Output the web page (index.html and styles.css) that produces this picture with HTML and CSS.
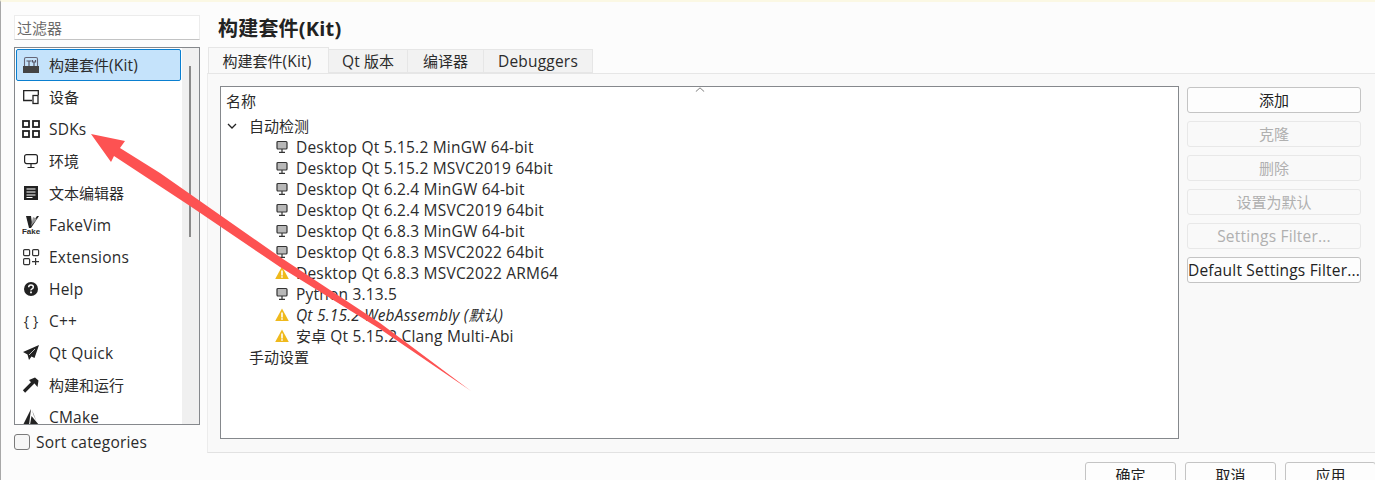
FILE: index.html
```html
<!DOCTYPE html>
<html>
	<head>
		<meta charset="utf-8">
		<title>构建套件(Kit)</title>
		<link rel="stylesheet" href="styles.css">
	</head>
	<body>
		<div class="window">
			<div class="content">
				<div class="side">
					<div class="filter cn">过滤器</div>
					<div class="cats">
						<div class="catlist">
							<div class="cat active">
								<svg class="caticon" viewBox="0 0 18 18"><path d="M1 10h16v7H1z" fill="#444"/><path d="M2.500 10V3q0-1.500 1.500-1.500h10q1.500 0 1.500 1.500v7" fill="none" stroke="#667" stroke-width="1.100"/><path d="M4.500 5h5M7 5v5M10.500 4v2h3V4M12 6v4" fill="none" stroke="#556" stroke-width="1.200"/></svg>
								<span><span class="cn">构建套件</span>(Kit)</span>
							</div>
							<div class="cat">
								<svg class="caticon" viewBox="0 0 18 18"><path d="M10 12.500H1.700V2.700h14.600V7" fill="none" stroke="#222" stroke-width="1.300"/><rect x="11" y="7.500" width="5" height="8" fill="#fff" stroke="#222" stroke-width="1.300"/></svg>
								<span class="cn">设备</span>
							</div>
							<div class="cat">
								<svg class="caticon" viewBox="0 0 18 18"><g fill="none" stroke="#222" stroke-width="1.800"><rect x="1" y="1" width="6" height="6"/><rect x="11" y="1" width="6" height="6"/><rect x="1" y="11" width="6" height="6"/><rect x="11" y="11" width="6" height="6"/></g></svg>
								<span>SDKs</span>
							</div>
							<div class="cat">
								<svg class="caticon" viewBox="0 0 18 18"><rect x="2.600" y="2.600" width="12.800" height="9" rx="2" fill="none" stroke="#222" stroke-width="1.200"/><path d="M9 11.500v4M5.500 15.500h7" fill="none" stroke="#222" stroke-width="1.200"/></svg>
								<span class="cn">环境</span>
							</div>
							<div class="cat">
								<svg class="caticon" viewBox="0 0 18 18"><path d="M2 2h14v14H2z" fill="#222"/><path d="M4.500 5h9M4.500 8h9M4.500 11h9M4.500 13.500h6" stroke="#fff" stroke-width="1.100"/></svg>
								<span class="cn">文本编辑器</span>
							</div>
							<div class="cat">
								<div class="fakeicon">
									<svg viewBox="0 0 18 12"><path d="M4 0h5l1 7 5-7h2L9 12H7z" fill="#222"/><path d="M11 1l4 2-6 7z" fill="#999"/></svg>
									<span class="faketext">Fake</span>
								</div>
								<span>FakeVim</span>
							</div>
							<div class="cat">
								<svg class="caticon" viewBox="0 0 18 18"><g fill="none" stroke="#333" stroke-width="1.200"><rect x="1.600" y="1.600" width="6" height="6" rx="1"/><rect x="10.600" y="1.600" width="6" height="6" rx="1"/><rect x="1.600" y="10.600" width="6" height="6" rx="1"/><path d="M13.600 10v7M10 13.600h7"/></g></svg>
								<span>Extensions</span>
							</div>
							<div class="cat">
								<svg class="caticon" viewBox="0 0 18 18"><circle cx="9" cy="9" r="7" fill="#222"/><path d="M6.700 7.200q0-2.200 2.300-2.200t2.300 2q0 1.200-1.200 1.800T9 10.300" fill="none" stroke="#fff" stroke-width="1.500"/><path d="M8.100 11.400h1.800v1.800H8.100z" fill="#fff"/></svg>
								<span>Help</span>
							</div>
							<div class="cat">
								<span class="bracesicon">{ }</span>
								<span>C++</span>
							</div>
							<div class="cat">
								<svg class="caticon" viewBox="0 0 18 18"><path d="M17 1L1 8l4.500 2.500L7 16l2.500-3.500 3 1.500z" fill="#222"/><path d="M13 5l-6 6" stroke="#fff" stroke-width=".7"/></svg>
								<span>Qt Quick</span>
							</div>
							<div class="cat">
								<svg class="caticon" viewBox="0 0 18 18"><path d="M2 15.500L11 6.500" stroke="#222" stroke-width="3.200"/><path d="M7 4l6-2.500 3.500 3-1 6.500-3-3.500-2 .5z" fill="#222"/></svg>
								<span class="cn">构建和运行</span>
							</div>
							<div class="cat">
								<svg class="caticon" viewBox="0 0 18 18"><path d="M9 1l-8 16h6zM9.500 8L17 17H8z" fill="#222"/><path d="M10 2l1.500 5 3 6z" fill="#666"/></svg>
								<span>CMake</span>
							</div>
						</div>
						<div class="catscroll"><div class="catthumb"></div></div>
					</div>
					<div class="sort">
						<div class="checkbox"></div>
						<span>Sort categories</span>
					</div>
				</div>
				<div class="main">
					<h1 class="title">构建套件(Kit)</h1>
					<div class="tabs">
						<div class="tab current"><span class="cn">构建套件</span>(Kit)</div>
						<div class="tab t2">Qt <span class="cn">版本</span></div>
						<div class="tab t3 cn">编译器</div>
						<div class="tab t4">Debuggers</div>
					</div>
					<div class="panel">
						<div class="tree">
							<div class="treehead">
								<span class="cn">名称</span>
								<svg class="sortmark" viewBox="0 0 12 6"><path d="M1 5.500L6 1l5 4.500" fill="none" stroke="#666" stroke-width="1"/></svg>
							</div>
							<div class="row group">
								<svg class="chevron" viewBox="0 0 10 6"><path d="M1 1l4 4 4-4" fill="none" stroke="#222" stroke-width="1.300"/></svg>
								<span class="cn">自动检测</span>
							</div>
							<div class="row kit"><svg class="pc" viewBox="0 0 14 14"><use href="#pc"/></svg><span>Desktop Qt 5.15.2 MinGW 64-bit</span></div>
							<div class="row kit"><svg class="pc" viewBox="0 0 14 14"><use href="#pc"/></svg><span>Desktop Qt 5.15.2 MSVC2019 64bit</span></div>
							<div class="row kit"><svg class="pc" viewBox="0 0 14 14"><use href="#pc"/></svg><span>Desktop Qt 6.2.4 MinGW 64-bit</span></div>
							<div class="row kit"><svg class="pc" viewBox="0 0 14 14"><use href="#pc"/></svg><span>Desktop Qt 6.2.4 MSVC2019 64bit</span></div>
							<div class="row kit"><svg class="pc" viewBox="0 0 14 14"><use href="#pc"/></svg><span>Desktop Qt 6.8.3 MinGW 64-bit</span></div>
							<div class="row kit"><svg class="pc" viewBox="0 0 14 14"><use href="#pc"/></svg><span>Desktop Qt 6.8.3 MSVC2022 64bit</span></div>
							<div class="row kit"><svg class="pc" viewBox="0 0 14 14"><use href="#warn"/></svg><span>Desktop Qt 6.8.3 MSVC2022 ARM64</span></div>
							<div class="row kit"><svg class="pc" viewBox="0 0 14 14"><use href="#pc"/></svg><span>Python 3.13.5</span></div>
							<div class="row kit"><svg class="pc" viewBox="0 0 14 14"><use href="#warn"/></svg><span class="default">Qt 5.15.2 WebAssembly (<span class="cn">默认</span>)</span></div>
							<div class="row kit"><svg class="pc" viewBox="0 0 14 14"><use href="#warn"/></svg><span><span class="cn">安卓</span> Qt 5.15.2 Clang Multi-Abi</span></div>
							<div class="row group manual"><span class="cn">手动设置</span></div>
						</div>
						<div class="actions">
							<div class="btn cn">添加</div>
							<div class="btn off cn">克隆</div>
							<div class="btn off cn">删除</div>
							<div class="btn off cn">设置为默认</div>
							<div class="btn off">Settings Filter...</div>
							<div class="btn">Default Settings Filter...</div>
						</div>
					</div>
					<div class="footer">
						<div class="btn wide cn">确定</div>
						<div class="btn wide cn">取消</div>
						<div class="btn wide cn">应用</div>
					</div>
				</div>
			</div>
		</div>
		<svg class="defs" width="0" height="0">
			<symbol id="pc" viewBox="0 0 14 14"><rect x="2" y="1.500" width="10" height="7.500" rx="1" fill="#b8b8b8" stroke="#333" stroke-width="1.200"/><path d="M7 9v3M4 12.300h6" stroke="#333" stroke-width="1.200"/></symbol>
			<symbol id="warn" viewBox="0 0 14 14"><path d="M7 .5l6.800 12.500H.2z" fill="#efb91c"/><path d="M6.200 4.500h1.600v5H6.200zM6.200 10.300h1.600v1.500H6.200z" fill="#fff"/></symbol>
		</svg>
		<svg class="arrow" viewBox="0 0 1375 480"><polygon points="91,134 125,141 120,148 160,173 190,194 280,257 380,323 471,391 380,329 280,267 190,206 114,156 111,162" fill="#fd5252"/></svg>
	</body>
</html>
```
FILE: styles.css
```css
html {
	height: 100%;
}
body {
	margin: 0;
	height: 480px;
	overflow: hidden;
	position: relative;
	font-family: "Open Sans", "Noto Sans CJK SC", sans-serif;
	font-size: 15.5px;
	letter-spacing: 0.2px;
	color: #2b2b2b;
	background-color: #fcfcfc;
}
.cn {
	font-size: 15px;
	letter-spacing: 0;
}
.window {
	height: 478px;
	border-top: 2px solid #fbf8e4;
	border-left: 1px solid #a8a8a8;
}
.content {
	display: flex;
	padding-top: 13px;
	padding-left: 13px;
}
.side {
	width: 186px;
	flex: none;
}
.filter {
	box-sizing: border-box;
	height: 25px;
	line-height: 24px;
	padding-left: 2px;
	color: #6a6a6a;
	background-color: #fff;
	border: 1px solid #ececec;
	border-bottom-color: #c4c4c4;
}
.cats {
	box-sizing: border-box;
	height: 378px;
	margin-top: 7px;
	display: flex;
	overflow: hidden;
	background-color: #fff;
	border: 1px solid #85888c;
}
.catlist {
	width: 167px;
	padding-top: 1px;
	overflow: hidden;
}
.cat {
	display: flex;
	align-items: center;
	box-sizing: border-box;
	height: 32px;
	width: 165px;
	margin-left: 1px;
	padding-left: 6px;
	padding-bottom: 1px;
	gap: 9px;
}
.cat.active {
	background-color: #c5e3fb;
	border: 1px solid #0a7fd0;
	border-radius: 2px;
	padding-left: 5px;
}
.caticon {
	width: 18px;
	height: 18px;
	flex: none;
}
.fakeicon {
	width: 18px;
	height: 18px;
	flex: none;
	display: flex;
	flex-flow: column;
	align-items: center;
}
.fakeicon svg {
	width: 18px;
	height: 12px;
	flex: none;
}
.faketext {
	font-family: "Liberation Sans", sans-serif;
	font-size: 8px;
	font-weight: bold;
	line-height: 7px;
	letter-spacing: 0;
}
.bracesicon {
	width: 18px;
	flex: none;
	font-size: 14px;
	text-align: center;
	white-space: pre;
}
.catscroll {
	flex: 1;
	background-color: #f0f0f0;
	padding-top: 18px;
	padding-left: 7px;
}
.catthumb {
	width: 2px;
	height: 171px;
	background-color: #8a8a8a;
}
.sort {
	display: flex;
	align-items: center;
	height: 20px;
	line-height: 20px;
	margin-top: 7px;
	gap: 6px;
}
.checkbox {
	box-sizing: border-box;
	width: 16px;
	height: 16px;
	background-color: #f6f6f6;
	border: 1px solid #7a7a7a;
	border-radius: 3px;
}
.main {
	width: 1168px;
	margin-left: 7px;
	flex: none;
}
.title {
	margin: 0 0 0 11px;
	height: 32px;
	font-size: 20px;
	font-weight: bold;
	line-height: 28px;
	letter-spacing: 0.2px;
	color: #222;
}
.tabs {
	display: flex;
	height: 26px;
	align-items: flex-end;
	padding-left: 1px;
}
.tab {
	box-sizing: border-box;
	height: 24px;
	line-height: 23px;
	text-align: center;
	background-color: #f2f2f2;
	border: 1px solid #e6e6e6;
	border-left: 0;
}
.tab.current {
	width: 121px;
	height: 26px;
	line-height: 26px;
	padding-right: 3px;
	background-color: #f9f9f9;
	border-left: 1px solid #e6e6e6;
	border-bottom: 0;
}
.t2 {
	width: 79px;
}
.t3 {
	width: 76px;
}
.t4 {
	width: 109px;
}
.panel {
	box-sizing: border-box;
	height: 380px;
	display: flex;
	padding: 12px 14px 14px 12px;
	background-color: #f9f9f9;
	border-top: 1px solid #e6e6e6;
	border-bottom: 1px solid #e2e2e2;
	border-left: 1px solid #ececec;
}
.tree {
	box-sizing: border-box;
	width: 959px;
	flex: none;
	height: 353px;
	background-color: #fff;
	border: 1px solid #85888c;
}
.treehead {
	height: 28px;
	line-height: 28px;
	padding-left: 5px;
	position: relative;
}
.sortmark {
	position: absolute;
	left: 474px;
	top: 0;
	width: 10px;
	height: 5px;
}
.row {
	display: flex;
	align-items: center;
	height: 21px;
	white-space: nowrap;
}
.group {
	padding-left: 6px;
	gap: 12px;
}
.manual {
	padding-left: 28px;
}
.chevron {
	width: 10px;
	height: 6px;
	flex: none;
}
.kit {
	padding-left: 54px;
	gap: 7px;
}
.pc {
	width: 14px;
	height: 14px;
	flex: none;
}
.default {
	font-style: italic;
}
.actions {
	width: 174px;
	margin-left: 8px;
	padding-top: 1px;
	display: flex;
	flex-flow: column;
	gap: 8px;
}
.btn {
	box-sizing: border-box;
	height: 26px;
	line-height: 24px;
	text-align: center;
	white-space: nowrap;
	color: #222;
	background-color: #fdfdfd;
	border: 1px solid #c4c4c4;
	border-radius: 3px;
}
.btn.off {
	color: #b0b0b0;
	background-color: #f9f9f9;
	border-color: #e8e8e8;
}
.footer {
	display: flex;
	justify-content: flex-end;
	margin-top: 9px;
	margin-right: -1px;
	gap: 9px;
}
.wide {
	width: 91px;
	flex: none;
}
.defs {
	position: absolute;
}
.arrow {
	position: absolute;
	left: 0;
	top: 0;
	width: 1375px;
	height: 480px;
}
```
